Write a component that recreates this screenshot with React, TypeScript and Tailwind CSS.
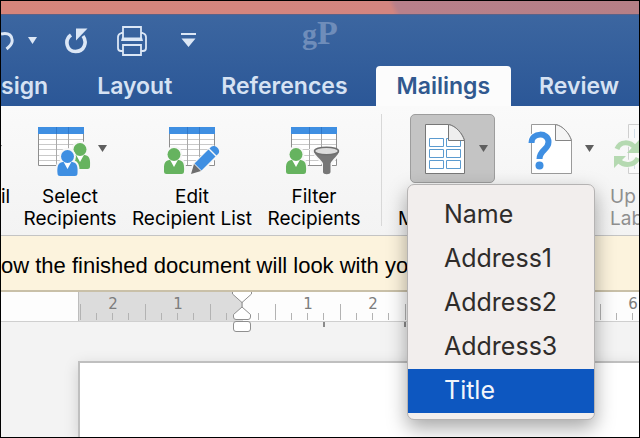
import { useState, type ReactNode } from 'react'

const FIELDS = ['Name', 'Address1', 'Address2', 'Address3', 'Title']
const INCH = 65
const ORIGIN = 242

function Caret({ className = 'text-[#5f5f5f]' }: { className?: string }) {
  return (
    <svg width="9" height="7" viewBox="0 0 9 7" className={`shrink-0 ${className}`} aria-hidden="true">
      <path d="M0 0h9L4.5 7z" fill="currentColor" />
    </svg>
  )
}

function Grid({ x }: { x: number }) {
  return (
    <g transform={`translate(${x} 0)`}>
      <path d="M.5 8V39.5H45.5V8" fill="#fff" stroke="#8e8e8e" />
      <path d="M1 13.5H45M1 18.5H45M1 23.5H45M1 29.5H45M1 34.5H45" stroke="#c9c9c9" />
      <path d="M18.5 8V39M30.5 8V39" stroke="#a9a9a9" />
      <rect y="1" width="46" height="7" fill="#3f8fe2" />
      <path d="M18.5 1V8M30.5 1V8" stroke="#2f79cc" />
    </g>
  )
}

function Person({ x, y, color }: { x: number; y: number; color: string }) {
  const body = 'M3.5 12.5C.5 13.5-.5 17 0 23.5c.2 1.800 1 2.500 2.500 2.500h15c1.500 0 2.300-.7 2.500-2.500.5-6.500-.5-10-3.500-11l-2.500-.8L10 19l-4-7.300z'
  return (
    <g transform={`translate(${x} ${y})`}>
      <g stroke="#f7f7f7" strokeWidth="4" fill="#f7f7f7">
        <circle cx="10" cy="6.500" r="6.500" />
        <path d={body} />
      </g>
      <path d="M5 11h10l-5 9z" fill="#fff" />
      <circle cx="10" cy="6.500" r="6.500" fill={color} />
      <path d={body} fill={color} />
    </g>
  )
}

function RecipientsIcon({ kind }: { kind: 'select' | 'edit' | 'filter' }) {
  return (
    <svg width="56" height="54" viewBox="0 -4 56 54" className="shrink-0" aria-hidden="true">
      <Grid x={kind === 'select' ? 0 : 5} />
      {kind === 'select' && (
        <>
          <Person x={32} y={17} color="#66b35f" />
          <Person x={19.5} y={24} color="#3f8fe2" />
        </>
      )}
      {kind !== 'select' && <Person x={0} y={22} color="#66b35f" />}
      {kind === 'edit' && (
        <>
          <path d="M27 48l3-9 19-18 6 6-18 18z" fill="#f7f7f7" stroke="#f7f7f7" strokeWidth="4" />
          <path d="M27 48l3-10 7 7z" fill="#6e6e6e" />
          <path d="M30.500 37.500l14-14 7 7L37.500 44.500z" fill="#3f8fe2" />
          <path d="M45.500 22.500l1.800-1.700c4-3 10 3 7 7L52.500 29.500z" fill="#3f8fe2" />
        </>
      )}
      {kind === 'filter' && (
        <>
          <path d="M27 25l11 13v10h6V38l10-13z" fill="#f7f7f7" stroke="#f7f7f7" strokeWidth="4" />
          <path d="M28 25c0 4 8 9 9 12.500V46c0 3 7.500 3 7.500 0v-8.500C45.500 34 53 29 53 25z" fill="#777" />
          <ellipse cx="40.500" cy="25" rx="12" ry="3.800" fill="#dcdcdc" stroke="#6f6f6f" strokeWidth="1.500" />
        </>
      )}
    </svg>
  )
}

function MergeFieldIcon() {
  return (
    <svg width="40" height="50" viewBox="0 0 40 50" className="shrink-0" aria-hidden="true">
      <path d="M.5.5H23.500C31 2 37 9 39.500 16.500V49.500H.5z" fill="#fff" stroke="#777" />
      <g fill="#fff" stroke="#5b9bd0">
        <path d="M4.500 14.500h14v8h-14zM4.500 25.500h14v8h-14zM4.500 36.500h14v8h-14z" />
        <path d="M21.500 14.500h14v8h-14zM21.500 25.500h14v8h-14zM21.500 36.500h14v8h-14z" />
      </g>
      <path d="M23.500.5V16.500H39.500C37 9 31 2 23.500.5z" fill="#eee" stroke="#777" />
    </svg>
  )
}

function QuestionIcon() {
  return (
    <svg width="44" height="50" viewBox="0 0 44 50" className="shrink-0" aria-hidden="true">
      <path d="M3.500.5H27.500C35 2 41 9 43.500 16.500V49.500H3.500z" fill="#fff" stroke="#9b9b9b" />
      <path d="M27.500.5V16.500H43.500C41 9 35 2 27.500.5z" fill="#f5f5f5" stroke="#858585" />
      <path d="M3.500 19C3.500 8 20.500 8 20.500 18c0 8-9 7.500-9 17" fill="none" stroke="#fff" strokeWidth="8" />
      <path d="M3.500 19C3.500 8 20.500 8 20.500 18c0 8-9 7.500-9 17" fill="none" stroke="#3f8fe2" strokeWidth="6" />
      <circle cx="11.500" cy="41.500" r="4" fill="#3f8fe2" />
    </svg>
  )
}

function UpdateIcon() {
  return (
    <svg width="44" height="50" viewBox="0 0 44 50" className="shrink-0" aria-hidden="true">
      <path d="M14.500.5H43.500V49.500H14.500z" fill="#fafafa" stroke="#cfcfcf" />
      <path d="M20.500 5V14M20.500 36V45" stroke="#d3dfe8" />
      <g stroke="#f7f7f7" strokeWidth="8" fill="none">
        <path d="M3 25C5 17 15 16 20 22M22 34c-5 8-13 7-18 2" />
      </g>
      <g stroke="#b5d9b1" strokeWidth="5" fill="none">
        <path d="M3 25C6 17 16 17 21 24" />
        <path d="M24 34C20 42 10 42 5 37" />
      </g>
      <path d="M25 16v13H13zM0 44V32h12z" fill="#b5d9b1" />
    </svg>
  )
}

function RibbonButton({ icon, lines, className = '' }: { icon: ReactNode; lines: string[]; className?: string }) {
  return (
    <button type="button" className={`flex shrink-0 flex-col text-[19px] leading-[22px] ${className}`}>
      <span className="flex h-[69px] w-full items-center">{icon}</span>
      <span className="mt-[3px] block w-full">
        {lines.map(line => <span key={line} className="block whitespace-nowrap">{line}</span>)}
      </span>
    </button>
  )
}

function Tab({ label, active, onClick }: { label: string; active: boolean; onClick: () => void }) {
  return (
    <button
      type="button"
      role="tab"
      aria-selected={active}
      onClick={onClick}
      className={`h-10 shrink-0 rounded-t-[4px] px-[21px] text-[23px] font-semibold ${active ? 'bg-[#fcfcfc] text-[#31598f]' : 'text-[#d6e2f3]'}`}
    >
      {label}
    </button>
  )
}

function Ruler() {
  const ticks = Array.from({ length: 120 }, (_, i) => i - 10).filter(i => i !== 0)
  const numbers = [-2, -1, 1, 2, 3, 4, 5, 6]
  return (
    <div className="relative z-10 h-[30px] border-b border-[#cfcfcf] bg-[#fdfdfd]">
      <svg width="100%" height="29" className="block" aria-hidden="true">
        <rect x="77" y="0" width={ORIGIN - 77} height="29" fill="#dcdcdc" />
        <path d="M77.500 0V29" stroke="#bdbdbd" />
        {ticks.map(i => {
          const x = Math.round(ORIGIN + (i * INCH) / 4) - 0.5
          return <path key={i} d={`M${x} ${Math.abs(i) % 4 === 2 ? 12 : 21}V28`} stroke="#b3b3b3" />
        })}
        <g fill="#7d7d7d" fontFamily="DejaVu Sans, sans-serif" fontSize="15" textAnchor="middle">
          {numbers.map(n => <text key={n} x={ORIGIN + n * INCH} y="17">{Math.abs(n)}</text>)}
        </g>
      </svg>
      {/* indent markers */}
      <svg width="20" height="42" viewBox="0 0 20 42" className="absolute top-0 left-[231px]" aria-hidden="true">
        <path d="M.5 0V2L10 10.500 19.500 2V0" fill="#fff" stroke="#8f8f8f" />
        <path d="M10 10V16" stroke="#8f8f8f" />
        <path d="M10 15L18.500 22.500V25Q18.500 27.500 16 27.500H4Q1.500 27.500 1.500 25V22.500z" fill="#fff" stroke="#8f8f8f" />
        <rect x="1.500" y="29.500" width="17" height="10" rx="2.500" fill="#fff" stroke="#8f8f8f" />
      </svg>
      <svg width="100" height="6" className="absolute top-[30px] left-[322px]" aria-hidden="true">
        <path d="M1 0V5M82 0V5" stroke="#8a8a8a" strokeWidth="2" />
      </svg>
    </div>
  )
}

export default function App() {
  const [tab, setTab] = useState('Mailings')
  const [field, setField] = useState('Title')
  const [open, setOpen] = useState(true)

  return (
    <div className="flex min-h-screen w-full flex-col overflow-hidden border border-black bg-[#f3f3f3] font-['Inter',sans-serif] text-black">
      <div className="h-[13px] bg-[linear-gradient(65deg,#d6857b_0%,#d38580_61%,#b8808b_62%,#b67f86_100%)]" />

      <header className="border-t border-[#5a6288] bg-gradient-to-b from-[#3c66a0] to-[#2b5797]">
        <div className="flex h-[51px] items-center">
          <div className="flex flex-1 items-center text-[#dce7f6]">
            <button type="button" aria-label="Undo">
              <svg width="13" height="24" viewBox="0 0 13 24" fill="none" stroke="currentColor" strokeWidth="3">
                <path d="M0 5C8 3 12 7 11 13c-.5 3-3 5-5.500 7" />
              </svg>
            </button>
            <button type="button" aria-label="Undo history" className="ml-[14px]"><Caret className="text-[#dce7f6]" /></button>
            <button type="button" aria-label="Repeat" className="ml-7">
              <svg width="24" height="26" viewBox="0 0 24 26">
                <path d="M6 7C-1 12 1.500 23.500 10.500 23.500c9 0 12-9.500 7.500-15.500" fill="none" stroke="currentColor" strokeWidth="3.600" />
                <path d="M11 .5H22.500L11 12.500z" fill="currentColor" />
              </svg>
            </button>
            <button type="button" aria-label="Print" className="ml-7">
              <svg width="30" height="30" viewBox="0 0 30 30" fill="none" stroke="currentColor" strokeWidth="1.800">
                <path d="M6 7H4.500Q1 8 1 11V22Q1 25 4 25H6M24 7H25.500Q29 8 29 11V22Q29 25 26 25H24" />
                <path d="M6 12V1H24V12" />
                <path d="M5 11.500H25L26 15H4z" fill="currentColor" stroke="none" />
                <path d="M6 19H24V29H6z" />
              </svg>
            </button>
            <button type="button" aria-label="Customize toolbar" className="ml-[34px]">
              <svg width="15" height="15" viewBox="0 0 15 15" fill="currentColor">
                <path d="M0 0h15v2H0zM.5 5.500h14L7.500 14z" />
              </svg>
            </button>
          </div>
          <div className="self-start font-['Liberation_Serif',serif] text-[30px] leading-9 font-bold text-[#6f8dba]">
            g<span className="text-[34px]">P</span>
          </div>
          <div className="flex-1" />
        </div>
        <div role="tablist" className="-ml-[21px] flex gap-[7px] overflow-hidden">
          {['sign', 'Layout', 'References', 'Mailings', 'Review'].map(t => (
            <Tab key={t} label={t} active={tab === t} onClick={() => setTab(t)} />
          ))}
        </div>
      </header>

      <div className="relative z-20 flex h-[130px] border-b border-[#c4c4c4] bg-gradient-to-b from-[#fafafa] to-[#f3f3f3] pt-2">
        <RibbonButton className="w-[13px] text-left" icon={<Caret className="-ml-2 text-[#5f5f5f]" />} lines={['il']} />
        <RibbonButton
          className="w-28 text-center"
          icon={<span className="flex items-center gap-1 pl-6"><RecipientsIcon kind="select" /><Caret /></span>}
          lines={['Select', 'Recipients']}
        />
        <RibbonButton
          className="w-[132px] text-center"
          icon={<span className="mx-auto"><RecipientsIcon kind="edit" /></span>}
          lines={['Edit', 'Recipient List']}
        />
        <RibbonButton
          className="w-28 text-center"
          icon={<span className="mx-auto"><RecipientsIcon kind="filter" /></span>}
          lines={['Filter', 'Recipients']}
        />
        <div className="mr-4 ml-[11px] h-28 w-px shrink-0 bg-[#d8d8d8]" />

        <div className="relative w-[109px] shrink-0">
          <button
            type="button"
            aria-label="Merge field"
            aria-expanded={open}
            onClick={() => setOpen(!open)}
            className="mx-auto flex h-[69px] w-[85px] items-center justify-between rounded-[5px] border border-[#9d9d9d] bg-[#c4c4c4] pr-[6px] pl-[14px]"
          >
            <MergeFieldIcon />
            <Caret />
          </button>
          <div className="mt-[25px] text-[19px] leading-[22px]">M</div>
          {open && (
            <ul
              role="menu"
              className="absolute top-[70px] left-[9px] w-[188px] rounded-[7px] border border-[#b5b3b3] bg-[#f2eeed] pt-2 pb-[6px] shadow-[0_8px_20px_rgba(0,0,0,0.35)]"
            >
              {FIELDS.map(name => (
                <li key={name} role="none">
                  <button
                    type="button"
                    role="menuitem"
                    onClick={() => setField(name)}
                    className={`block h-11 w-full pl-9 text-left text-[25px] ${field === name ? 'bg-[#0d57c0] text-[#f2f5fb]' : 'text-[#2f2c2b]'}`}
                  >
                    {name}
                  </button>
                </li>
              ))}
            </ul>
          )}
        </div>

        <button type="button" aria-label="Rules" className="ml-[21px] flex h-[69px] shrink-0 items-center gap-[13px]">
          <QuestionIcon />
          <Caret />
        </button>
        <RibbonButton className="ml-4 text-left text-[#8f8f8f]" icon={<span className="pl-1"><UpdateIcon /></span>} lines={['Up', 'Lab']} />
      </div>

      <div className="flex h-14 items-center overflow-hidden border-b-2 border-[#c9c0a8] bg-[#fcf3dd] pt-1">
        <p className="font-['Liberation_Sans',sans-serif] text-[22px] whitespace-nowrap">ow the finished document will look with yo</p>
      </div>

      <Ruler />

      <main className="flex flex-1 pt-[39px] pl-[77px]">
        <div className="flex-1 border-t-2 border-l-2 border-[#bfbfbf] bg-white shadow-[0_4px_14px_rgba(0,0,0,0.15)]" />
      </main>
    </div>
  )
}
